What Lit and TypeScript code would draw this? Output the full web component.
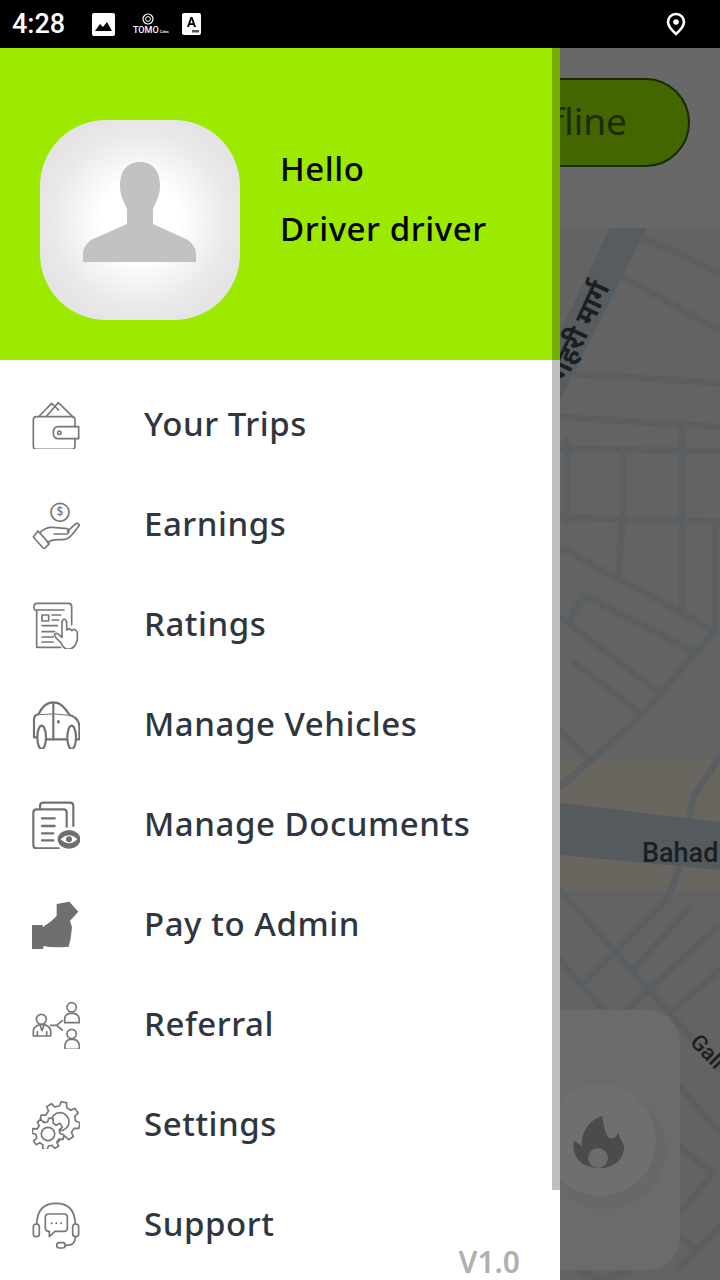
import {LitElement, html, svg, css} from 'lit'
import {customElement} from 'lit/decorators.js'

// builds a cog outline, used by the settings icon
function gearPath(cx: number, cy: number, outer: number, inner: number, teeth: number) {
  const pts: string[] = []
  const step = (Math.PI * 2) / teeth
  for (let i = 0; i < teeth; i++) {
    const a = i * step + 0.2
    const at = (r: number, o: number) =>
      `${(cx + r * Math.cos(a + o * step)).toFixed(1)} ${(cy + r * Math.sin(a + o * step)).toFixed(1)}`
    pts.push(at(inner, -0.3), at(outer, -0.18), at(outer, 0.18), at(inner, 0.3))
  }
  return `M${pts.join('L')}Z`
}

const ICONS = {
  wallet: svg`<svg viewBox="36 33 144 144" class="icon">
    <path d="M60 80H50Q40 80 40 90V168Q40 178 50 178H155Q165 178 165 168V148M165 110V90Q165 80 155 80H60"/>
    <path d="M165 110H115Q100 110 100 128Q100 146 115 146H176V110Z"/>
    <circle cx="118" cy="128" r="5"/>
    <path d="M58 78L95 40L116 60M80 78L115 38L158 80"/>
  </svg>`,
  earnings: svg`<svg viewBox="36 333 144 144" class="icon">
    <circle cx="120" cy="367" r="27"/>
    <text x="120" y="379" text-anchor="middle" class="dollar">$</text>
    <path d="M40 441L72 477L88 461L54 423Z"/>
    <path d="M60 428Q75 411 98 412L142 416Q152 422 142 432H102"/>
    <path d="M142 424L165 403Q174 396 178 406Q160 432 148 442Q138 450 118 449Q95 448 82 458"/>
  </svg>`,
  ratings: svg`<svg viewBox="36 633 144 144" class="icon">
    <path d="M50 660H46Q42 660 42 650Q42 640 52 640H146Q155 640 155 650V705M50 660V772H122M50 660H132"/>
    <rect x="66" y="675" width="20" height="18"/>
    <path d="M96 675H122M96 690H116M66 707H112M66 725H104M66 741H100M66 756H100"/>
    <path class="white" d="M122 757Q108 747 103 735Q108 725 118 735L126 742V695Q132 680 140 695V720Q150 712 155 722Q165 712 172 728V750Q165 778 142 778Q130 775 122 757Z"/>
  </svg>`,
  car: svg`<svg viewBox="36 33 144 144" class="icon bold">
    <path d="M52 142H42V88Q42 76 56 72Q70 42 92 38H108Q126 40 148 74Q178 84 178 110V148H170"/>
    <path class="hair" d="M56 74Q100 68 148 76"/>
    <path d="M100 38V148M78 148H142"/>
    <ellipse class="white" cx="65" cy="142" rx="13" ry="35"/>
    <ellipse class="white" cx="155" cy="142" rx="13" ry="35"/>
    <rect class="solid" x="111" y="91" width="8" height="9"/>
  </svg>`,
  documents: svg`<svg viewBox="36 333 144 144" class="icon bold">
    <path d="M60 356V348Q60 338 70 338H150Q160 338 160 348V408"/>
    <path d="M140 410V368Q140 358 130 358H50Q40 358 40 368V465Q40 475 50 475H116"/>
    <path class="thick" d="M66 385H104M66 408H104M66 430H100M66 451H100"/>
    <ellipse class="solid" cx="147" cy="448" rx="34" ry="28"/>
    <path class="white nostroke" d="M122 448Q147 424 172 448Q147 472 122 448Z"/>
    <circle class="solid" cx="147" cy="448" r="9"/>
  </svg>`,
  thumb: svg`<svg viewBox="36 633 144 144" class="icon">
    <path class="solid" d="M36 705H68V712L95 692L110 678V642L148 635L175 665L150 692L156 712L152 745L146 770Q100 775 70 768V780H36Z"/>
  </svg>`,
  referral: svg`<svg viewBox="36 33 144 144" class="icon">
    <circle cx="64" cy="88" r="15"/>
    <path d="M40 138V122Q42 108 60 104H72Q90 108 92 122V138Z"/>
    <path d="M60 105L66 122L72 105M52 125V138M80 125V138"/>
    <path d="M92 106H110L127 92M110 106L127 120"/>
    <circle cx="155" cy="52" r="14"/>
    <path d="M134 98V86Q136 72 150 70H160Q176 72 178 88V98Z"/>
    <circle cx="155" cy="132" r="14"/>
    <path d="M135 178V164Q137 150 150 148H160Q176 150 178 166V178Z"/>
  </svg>`,
  settings: svg`<svg viewBox="36 333 144 144" class="icon">
    <path d="${gearPath(120, 395, 60, 47, 8)}"/>
    <circle cx="120" cy="395" r="27"/>
    <path class="white" d="${gearPath(84, 432, 48, 36, 8)}"/>
    <circle class="white" cx="84" cy="432" r="20"/>
  </svg>`,
  support: svg`<svg viewBox="36 633 144 144" class="icon">
    <path d="M50 702Q52 640 108 640Q164 640 166 702"/>
    <rect x="40" y="702" width="18" height="38" rx="9"/>
    <rect x="158" y="702" width="18" height="38" rx="9"/>
    <path d="M86 672H132Q142 672 142 682V714Q142 724 132 724H105L88 740V724H86Q76 724 76 714V682Q76 672 86 672Z"/>
    <circle class="solid" cx="95" cy="700" r="3"/>
    <circle class="solid" cx="109" cy="700" r="3"/>
    <circle class="solid" cx="123" cy="700" r="3"/>
    <path d="M166 740Q166 766 140 766H134"/>
    <rect x="110" y="758" width="26" height="16" rx="8"/>
  </svg>`,
}

const MENU = [
  {label: 'Your Trips', icon: ICONS.wallet},
  {label: 'Earnings', icon: ICONS.earnings},
  {label: 'Ratings', icon: ICONS.ratings},
  {label: 'Manage Vehicles', icon: ICONS.car},
  {label: 'Manage Documents', icon: ICONS.documents},
  {label: 'Pay to Admin', icon: ICONS.thumb},
  {label: 'Referral', icon: ICONS.referral},
  {label: 'Settings', icon: ICONS.settings},
  {label: 'Support', icon: ICONS.support},
]

// thin streets, in screen coordinates
const STREETS = [
  'M643 238L720 273', 'M622 277L720 330', 'M560 373L720 383', 'M560 417L720 427',
  'M682 427V610', 'M560 449L720 451', 'M567 440V520', 'M623 450V520', 'M622 525L618 577',
  'M560 517L720 522', 'M715 522V628', 'M560 547L713 630', 'M713 633L640 717L560 787',
  'M570 620L583 595L697 653', 'M560 617L660 693', 'M575 663L640 713', 'M560 730L590 760',
  'M720 757L693 797L690 817', 'M680 867L667 900L587 980', 'M690 907L633 970', 'M717 927L627 1010',
  'M720 970L673 1010', 'M560 890L720 1070', 'M560 960L603 1010', 'M680 1087L720 1133',
  'M680 1147L713 1173L680 1213', 'M680 1237L697 1250', 'M677 1270L720 1227', 'M582 1272L600 1280L628 1272',
]

@customElement('app-root')
export class AppRoot extends LitElement {
  static override styles = css`
    :host {
      display: block;
      position: relative;
      width: 720px;
      height: 1280px;
      overflow: hidden;
      background: #666;
      font-family: "Noto Sans", sans-serif;
    }
    .status {
      height: 48px;
      background: #000;
      display: flex;
      align-items: center;
      color: #fff;
      position: relative;
      z-index: 2;
    }
    .time {
      font: 500 27px Roboto, sans-serif;
      margin-left: 12px;
      width: 80px;
    }
    .status svg { display: block; }
    .tomo {
      width: 30px;
      margin-left: 18px;
      margin-right: 19px;
      text-align: center;
    }
    .tomo span {
      display: block;
      font: 500 9px/9px Roboto, sans-serif;
      white-space: nowrap;
    }
    .tomo small { font-size: 4px; }
    .pin { margin-left: auto; margin-right: 34px; }
    .map {
      position: absolute;
      left: 0;
      top: 0;
      width: 720px;
      height: 1280px;
    }
    .drawer {
      position: relative;
      width: 560px;
      height: 1232px;
      background: #fff;
    }
    .thumbbar {
      position: absolute;
      right: 0;
      top: 0;
      width: 8px;
      height: 1142px;
      background: rgba(0, 0, 0, 0.25);
    }
    .header {
      height: 312px;
      box-sizing: border-box;
      background: #9cea00;
      padding: 72px 0 0 40px;
      display: flex;
      gap: 40px;
    }
    .avatar {
      width: 200px;
      height: 200px;
      border-radius: 66px;
      background: radial-gradient(circle at 50% 50%, #fff 28%, #e9e9e9 62%, #dedede 100%);
      display: flex;
      align-items: center;
      justify-content: center;
    }
    .avatar svg { display: block; margin-bottom: 16px; }
    .who {
      display: flex;
      flex-direction: column;
      gap: 18px;
      padding-top: 28px;
      font-size: 33px;
      line-height: 42px;
      font-weight: 500;
      letter-spacing: 0.55px;
      color: #000;
    }
    .menu { padding-top: 13px; }
    .row {
      height: 100px;
      display: flex;
      align-items: center;
      padding-left: 32px;
      gap: 64px;
      font-size: 33px;
      font-weight: 500;
      letter-spacing: 0.55px;
      color: #2f3640;
    }
    .row .icon { position: relative; top: 2px; }
    .version {
      position: absolute;
      right: 40px;
      bottom: 0;
      font-size: 30px;
      line-height: 36px;
      font-weight: 600;
      color: #b0b0b0;
    }
    .icon {
      width: 48px;
      height: 48px;
      flex: none;
      fill: none;
      stroke: #777;
      stroke-width: 5;
      stroke-linejoin: round;
      stroke-linecap: round;
    }
    .icon.bold { stroke-width: 6.5; stroke: #727272; }
    .icon .white { fill: #fff; }
    .icon .solid { fill: #6f6f6f; stroke: none; }
    .icon .thick { stroke-width: 7; }
    .icon .hair { stroke-width: 3; }
    .icon .nostroke { stroke: none; }
    .icon .dollar {
      font: 500 36px "Noto Sans", sans-serif;
      fill: #777;
      stroke: none;
    }
    .road { fill: none; stroke: #5b5f61; stroke-width: 7; stroke-linecap: round; stroke-linejoin: round; }
    .maptext { font-family: Roboto, "Noto Sans", sans-serif; font-weight: 500; fill: #1c1f21; }
    .hindi { font-weight: 700; }
  `

  private renderMap() {
    return html`<svg class="map" viewBox="0 0 720 1280">
      <rect x="560" y="48" width="160" height="180" fill="#686868"/>
      <rect x="560" y="228" width="160" height="1052" fill="#636363"/>
      <path fill="#69665f" d="M560 760H720V890H560Z"/>
      ${STREETS.map((d) => svg`<path class="road" d="${d}"/>`)}
      <path fill="#565c5f" d="M610 228H647L560 400V332Z"/>
      <path fill="#545a5e" d="M560 803L720 822V870L560 855Z"/>
      <text class="maptext hindi" font-size="28" transform="translate(566 382) rotate(-65)">गहरी मार्ग</text>
      <text class="maptext" x="642" y="862" font-size="27">Bahad</text>
      <text class="maptext" font-size="22" transform="translate(689 1043) rotate(46)">Gali</text>

      <rect x="440" y="79" width="249" height="87" rx="43.5" fill="#436600" stroke="#1a2a00" stroke-width="2"/>
      <text x="627" y="135" text-anchor="end" font-size="37" fill="#1a2c00" font-family="Noto Sans, sans-serif">Offline</text>

      <rect x="440" y="1010" width="240" height="260" rx="32" fill="#6b6b6b"/>
      <circle cx="606" cy="1150" r="60" fill="#656565" opacity="0.45"/>
      <circle cx="600" cy="1140" r="56" fill="#6f6f6f"/>
      <path fill="#4b4b4b" d="M602 1116C588 1120 581 1134 582 1146L574 1141C571 1154 580 1168 598 1168C612 1169 625 1160 624 1146L618 1133C616 1138 612 1140 608 1137C604 1131 604 1124 602 1116Z"/>
      <circle cx="598" cy="1158" r="10" fill="#6c6c6c"/>
    </svg>`
  }

  override render() {
    return html`
      ${this.renderMap()}
      <div class="status">
        <span class="time">4:28</span>
        <svg width="23" height="23" viewBox="0 0 23 23">
          <rect width="23" height="23" rx="2" fill="#fff"/>
          <path d="M3 18L8 11L11 14L15 9L20 18Z" fill="#000"/>
        </svg>
        <div class="tomo">
          <svg width="12" height="13" viewBox="0 0 12 13" style="margin:0 auto">
            <circle cx="6" cy="6" r="5" fill="none" stroke="#fff" stroke-width="1.2"/>
            <circle cx="6" cy="6" r="2.4" fill="none" stroke="#fff"/>
          </svg>
          <span>TOMO<small> Cabs</small></span>
        </div>
        <svg width="19" height="22" viewBox="0 0 19 22">
          <rect width="19" height="22" rx="2" fill="#fff"/>
          <path d="M5 14L8.5 4H10.5L14 14H12L11.3 12H7.7L7 14ZM8.3 10.2H10.7L9.5 6.6Z" fill="#000"/>
          <rect x="10" y="17" width="7" height="2.5" fill="#555"/>
        </svg>
        <svg class="pin" width="20" height="24" viewBox="0 0 20 24">
          <path d="M10 2C5.2 2 2 5.6 2 10C2 15 10 22 10 22C10 22 18 15 18 10C18 5.6 14.8 2 10 2Z" fill="none" stroke="#fff" stroke-width="2.6"/>
          <circle cx="10" cy="10" r="2.8" fill="#fff"/>
        </svg>
      </div>
      <div class="drawer">
        <div class="header">
          <div class="avatar">
            <svg width="114" height="100" viewBox="0 0 114 100">
              <path fill="#c2c2c2" d="M57 0C44 0 37 9 37 24C37 36 43 42 44 48V62L10 77C4 80 0 86 0 92V100H113V92C113 86 109 80 103 77L70 62V48C71 42 77 36 77 24C77 9 70 0 57 0Z"/>
            </svg>
          </div>
          <div class="who">
            <span>Hello</span>
            <span>Driver driver</span>
          </div>
        </div>
        <div class="menu">
          ${MENU.map((m) => html`<div class="row">${m.icon}<span>${m.label}</span></div>`)}
        </div>
        <div class="version">V1.0</div>
        <div class="thumbbar"></div>
      </div>
    `
  }
}

declare global {
  interface HTMLElementTagNameMap {
    'app-root': AppRoot
  }
}
